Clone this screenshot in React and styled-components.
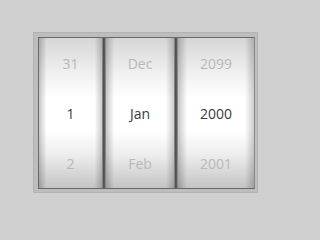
import React from "react";
import styled, { createGlobalStyle } from "styled-components";

const GlobalStyle = createGlobalStyle`
    html, body {
        margin: 0;
        padding: 0;
        background: #d0d0d0;
        font-family: "Open Sans", "Noto Sans", sans-serif;
    }
`;

const colunas = [
    { largura: 63, itens: ["31", "1", "2"] },
    { largura: 68, itens: ["Dec", "Jan", "Feb"] },
    { largura: 76, itens: ["2099", "2000", "2001"] },
];

function App() {
    return (
        <>
            <GlobalStyle />
            <Pagina>
                <Moldura>
                    <Rodas>
                        {colunas.map((coluna, i) => (
                            <React.Fragment key={i}>
                                {i > 0 && <Divisor />}
                                <Roda $largura={coluna.largura}>
                                    {coluna.itens.map((item, j) => (
                                        <Item key={j} $ativo={j === 1}>
                                            {item}
                                        </Item>
                                    ))}
                                </Roda>
                            </React.Fragment>
                        ))}
                    </Rodas>
                </Moldura>
            </Pagina>
        </>
    );
}

const Pagina = styled.div`
    width: 290px;
    height: 220px;
    padding: 32px 0 0 33px;
    box-sizing: border-box;
`;

const Moldura = styled.div`
    width: 225px;
    height: 161px;
    box-sizing: border-box;
    padding: 4px 2px 2px 4px;
    background: #bdbdbd;
    border: 1px solid #b3b3b3;
`;

const Rodas = styled.div`
    display: flex;
    height: 152px;
    box-sizing: border-box;
    border: 1px solid #6a6a6a;
    border-right-color: #8a8a8a;
    box-shadow: inset 1px 1px 2px rgba(0, 0, 0, 0.35);
    background: #777;
`;

const Roda = styled.div`
    width: ${(p) => p.$largura}px;
    display: grid;
    grid-template-rows: repeat(3, 1fr);
    background:
        linear-gradient(to right, rgba(0, 0, 0, 0.22), rgba(0, 0, 0, 0) 12%, rgba(0, 0, 0, 0) 88%, rgba(0, 0, 0, 0.2)),
        linear-gradient(to bottom, #d6d6d6 0%, #f2f2f2 25%, #ffffff 40%, #ffffff 62%, #ededed 78%, #c4c4c4 100%);
`;

const Divisor = styled.div`
    width: 4px;
    background: linear-gradient(to right, #a0a0a0, #4f4f4f 35%, #5e5e5e 70%, #a6a6a6);
`;

const Item = styled.div`
    display: flex;
    align-items: center;
    justify-content: center;
    font-size: 14px;
    color: ${(p) => (p.$ativo ? "#3a3a3a" : "#b8b8b8")};
`;

export default App;
